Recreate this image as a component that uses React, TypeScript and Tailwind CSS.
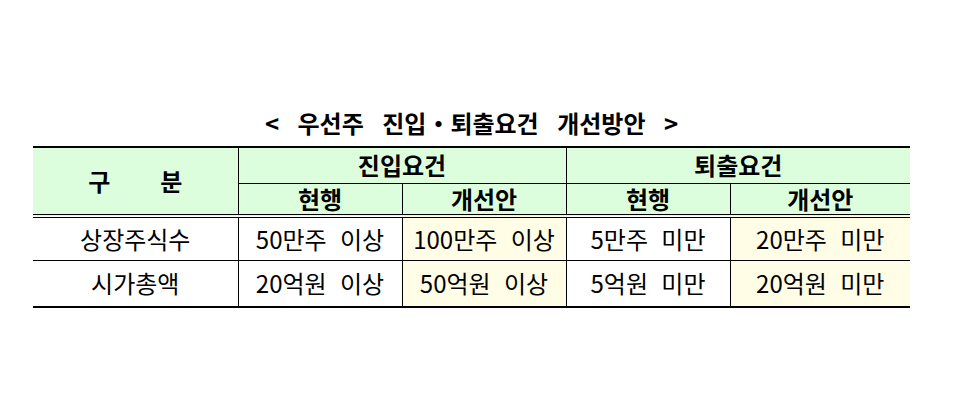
const font = "font-['Malgun_Gothic','Noto_Sans_CJK_KR',sans-serif]";

type Row = { label: string; cells: string[] };

const rows: Row[] = [
  { label: "상장주식수", cells: ["50만주 이상", "100만주 이상", "5만주 미만", "20만주 미만"] },
  { label: "시가총액", cells: ["20억원 이상", "50억원 이상", "5억원 미만", "20억원 미만"] },
];

const cellBg = ["bg-white", "bg-[#fffde6]", "bg-white", "bg-[#fffde6]"];

export default function App() {
  return (
    <div className={`w-[958px] h-[413px] bg-white pt-[108px] text-black ${font}`}>
      <div className="ml-[33px] w-[877px]">
        <h1 className="text-center text-[24px] leading-[30px] font-bold [word-spacing:13px] mb-[8px]">
          &lt; 우선주 진입・퇴출요건 개선방안 &gt;
        </h1>
        <table className="w-full border-collapse table-fixed">
          <colgroup>
            <col className="w-[205px]" />
            <col className="w-[164px]" />
            <col className="w-[164px]" />
            <col className="w-[164px]" />
            <col />
          </colgroup>
          <thead>
            <tr className="border-t-2 border-black h-[36px]">
              <th rowSpan={2} className="bg-[#ddfedd] text-[24px] font-bold border-r border-black">
                <span className="inline-flex gap-[50px]">
                  <span>구</span>
                  <span>분</span>
                </span>
              </th>
              <th colSpan={2} className="bg-[#ddfedd] text-[24px] font-bold leading-none border-r border-b border-black">
                진입요건
              </th>
              <th colSpan={2} className="bg-[#ddfedd] text-[24px] font-bold leading-none border-b border-black">
                퇴출요건
              </th>
            </tr>
            <tr className="h-[33px] border-b-4 border-double border-black">
              <th className="bg-[#ddfedd] text-[24px] font-bold leading-none border-r border-black">현행</th>
              <th className="bg-[#ddfedd] text-[24px] font-bold leading-none border-r border-black">개선안</th>
              <th className="bg-[#ddfedd] text-[24px] font-bold leading-none border-r border-black">현행</th>
              <th className="bg-[#ddfedd] text-[24px] font-bold leading-none">개선안</th>
            </tr>
          </thead>
          <tbody>
            {rows.map((row, i) => (
              <tr
                key={row.label}
                className={i === rows.length - 1 ? "h-[47px] border-b-2 border-black" : "h-[44px] border-b border-black"}
              >
                <td className="text-center text-[24px] leading-none border-r border-black">{row.label}</td>
                {row.cells.map((c, j) => (
                  <td
                    key={j}
                    className={`text-center text-[24px] leading-none [word-spacing:8px] ${cellBg[j]} ${j < 3 ? "border-r border-black" : ""}`}
                  >
                    {c}
                  </td>
                ))}
              </tr>
            ))}
          </tbody>
        </table>
      </div>
    </div>
  );
}
